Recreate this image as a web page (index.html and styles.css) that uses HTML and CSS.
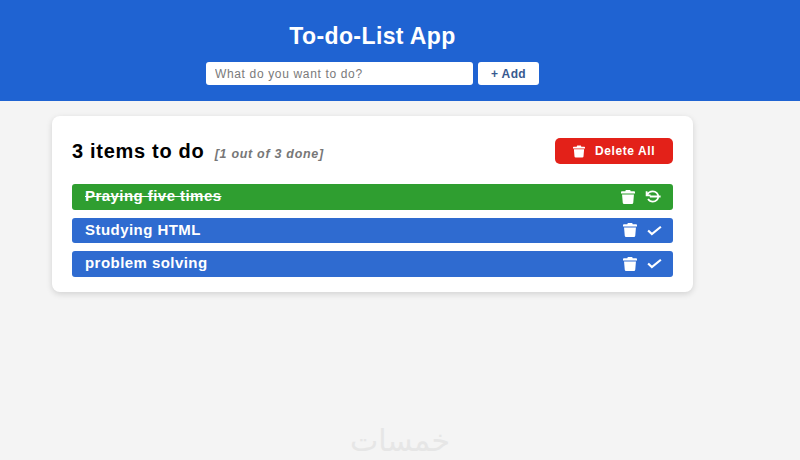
FILE: index.html
```html
<!DOCTYPE html>
<html lang="en">
<head>
    <meta charset="UTF-8">
    <meta name="viewport" content="width=device-width, initial-scale=1.0">
    <title>To-do-List App</title>
    <link rel="stylesheet" href="styles.css">
</head>
<body>
    <header class="header">
        <div class="header-inner">
            <h1 class="title">To-do-List App</h1>
            <form class="add-form">
                <input class="add-input" type="text" placeholder="What do you want to do?">
                <button class="add-btn" type="button">+ Add</button>
            </form>
        </div>
    </header>
    <main class="card">
        <div class="card-head">
            <h2 class="count">3 items to do <span class="count-done">[1 out of 3 done]</span></h2>
            <button class="delete-all" type="button">
                <svg class="icon-trash" viewBox="0 0 16 16"><path d="M5.500 0h5l.6 1.500H15a1 1 0 0 1 1 1V4H0V2.500a1 1 0 0 1 1-1h3.900zM1.200 5h13.600l-.8 9.500a1.600 1.600 0 0 1-1.600 1.500H3.600A1.600 1.600 0 0 1 2 14.500z"/></svg>
                Delete All
            </button>
        </div>
        <ul class="todo-list">
            <li class="todo todo-done">
                <span class="todo-text">Praying five times</span>
                <span class="todo-actions">
                    <svg class="icon-trash" viewBox="0 0 16 16"><path d="M5.500 0h5l.6 1.500H15a1 1 0 0 1 1 1V4H0V2.500a1 1 0 0 1 1-1h3.900zM1.200 5h13.600l-.8 9.500a1.600 1.600 0 0 1-1.600 1.500H3.600A1.600 1.600 0 0 1 2 14.500z"/></svg>
                    <svg class="icon-redo" viewBox="0 0 20 16"><path d="M2 1.500v5h5M2.300 6.500C3.500 3.500 6.300 1.500 9.800 1.500c3.700 0 6.800 2.900 6.800 6.500s-3.100 6.500-6.800 6.500c-2.600 0-4.800-1.300-6-3.300M6 8h13.500"/></svg>
                </span>
            </li>
            <li class="todo">
                <span class="todo-text">Studying HTML</span>
                <span class="todo-actions">
                    <svg class="icon-trash" viewBox="0 0 16 16"><path d="M5.500 0h5l.6 1.500H15a1 1 0 0 1 1 1V4H0V2.500a1 1 0 0 1 1-1h3.900zM1.200 5h13.600l-.8 9.500a1.600 1.600 0 0 1-1.600 1.500H3.600A1.600 1.600 0 0 1 2 14.500z"/></svg>
                    <svg class="icon-check" viewBox="0 0 16 11"><path d="M1.200 5.500l4 3.800 9.600-7.800"/></svg>
                </span>
            </li>
            <li class="todo">
                <span class="todo-text">problem solving</span>
                <span class="todo-actions">
                    <svg class="icon-trash" viewBox="0 0 16 16"><path d="M5.500 0h5l.6 1.500H15a1 1 0 0 1 1 1V4H0V2.500a1 1 0 0 1 1-1h3.900zM1.200 5h13.600l-.8 9.500a1.600 1.600 0 0 1-1.600 1.500H3.600A1.600 1.600 0 0 1 2 14.500z"/></svg>
                    <svg class="icon-check" viewBox="0 0 16 11"><path d="M1.200 5.500l4 3.800 9.600-7.800"/></svg>
                </span>
            </li>
        </ul>
    </main>
    <div class="watermark" lang="ar" dir="rtl">خمسات</div>
</body>
</html>
```

FILE: styles.css
```css
* {
    box-sizing: border-box;
}
html, body {
    height: 100%;
}
body {
    margin: 0;
    background: #f4f4f4;
    font-family: "Liberation Sans", Arial, sans-serif;
    color: #000;
    overflow: hidden;
    position: relative;
}
.header {
    background: #1f63d2;
    height: 101px;
    padding-top: 24px;
    padding-right: 55px;
}
.header-inner {
    display: flex;
    flex-direction: column;
    align-items: center;
    gap: 14px;
}
.title {
    margin: 0;
    color: #fff;
    font-size: 23px;
    line-height: 24px;
    letter-spacing: 0.4px;
    font-weight: bold;
}
.add-form {
    display: flex;
    gap: 5px;
}
.add-input {
    width: 267px;
    height: 23px;
    border: none;
    border-radius: 3px;
    padding: 0 9px;
    background: #fff;
    font-family: inherit;
    font-size: 12px;
    letter-spacing: 0.65px;
}
.add-input::placeholder {
    color: #7a7a7a;
    opacity: 1;
}
.add-btn {
    width: 61px;
    height: 23px;
    border: none;
    border-radius: 3px;
    background: #fff;
    color: #37598f;
    font-family: inherit;
    font-size: 12px;
    font-weight: bold;
    letter-spacing: 0.4px;
}
.card {
    width: 641px;
    margin: 15px 0 0 52px;
    background: #fff;
    border-radius: 8px;
    padding: 22px 20px 15px;
    box-shadow: 0 2px 6px rgba(0, 0, 0, 0.14);
}
.card-head {
    display: flex;
    justify-content: space-between;
    align-items: center;
    margin-bottom: 20px;
}
.count {
    margin: 0;
    font-size: 20px;
    font-weight: bold;
    letter-spacing: 0.7px;
}
.count-done {
    margin-left: 4px;
    font-size: 12.500px;
    font-style: italic;
    color: #777;
}
.delete-all {
    display: flex;
    align-items: center;
    width: 118px;
    height: 26px;
    padding: 0 0 0 18px;
    border: none;
    border-radius: 5px;
    background: #e32119;
    color: #fff;
    font-family: inherit;
    font-size: 12px;
    font-weight: bold;
    letter-spacing: 0.6px;
    gap: 10px;
}
.delete-all .icon-trash {
    width: 12px;
    height: 13px;
}
.todo-list {
    list-style: none;
    margin: 0;
    padding: 0;
    display: flex;
    flex-direction: column;
    gap: 8px;
}
.todo {
    display: flex;
    justify-content: space-between;
    align-items: center;
    height: 25.500px;
    padding: 0 11px 0 13px;
    border-radius: 3px;
    background: #2f6bd0;
    color: #fff;
    font-size: 15px;
    font-weight: bold;
    letter-spacing: 0.45px;
}
.todo-done {
    background: #2f9e30;
    padding-right: 12px;
}
.todo-done .todo-text {
    text-decoration: line-through;
}
.todo-text {
    padding-bottom: 2px;
}
.todo-actions {
    display: flex;
    align-items: center;
    gap: 10px;
}
.icon-trash {
    width: 14px;
    height: 14px;
    fill: #fff;
}
.icon-check {
    width: 15px;
    height: 11px;
    fill: none;
    stroke: #fff;
    stroke-width: 2.300;
}
.icon-redo {
    width: 16px;
    height: 13px;
    fill: none;
    stroke: #fff;
    stroke-width: 2.200;
}
.watermark {
    position: absolute;
    left: 0;
    width: 800px;
    bottom: 0;
    text-align: center;
    font-family: "DejaVu Sans", sans-serif;
    font-size: 30px;
    line-height: 38px;
    color: #e6e6e6;
}
```
